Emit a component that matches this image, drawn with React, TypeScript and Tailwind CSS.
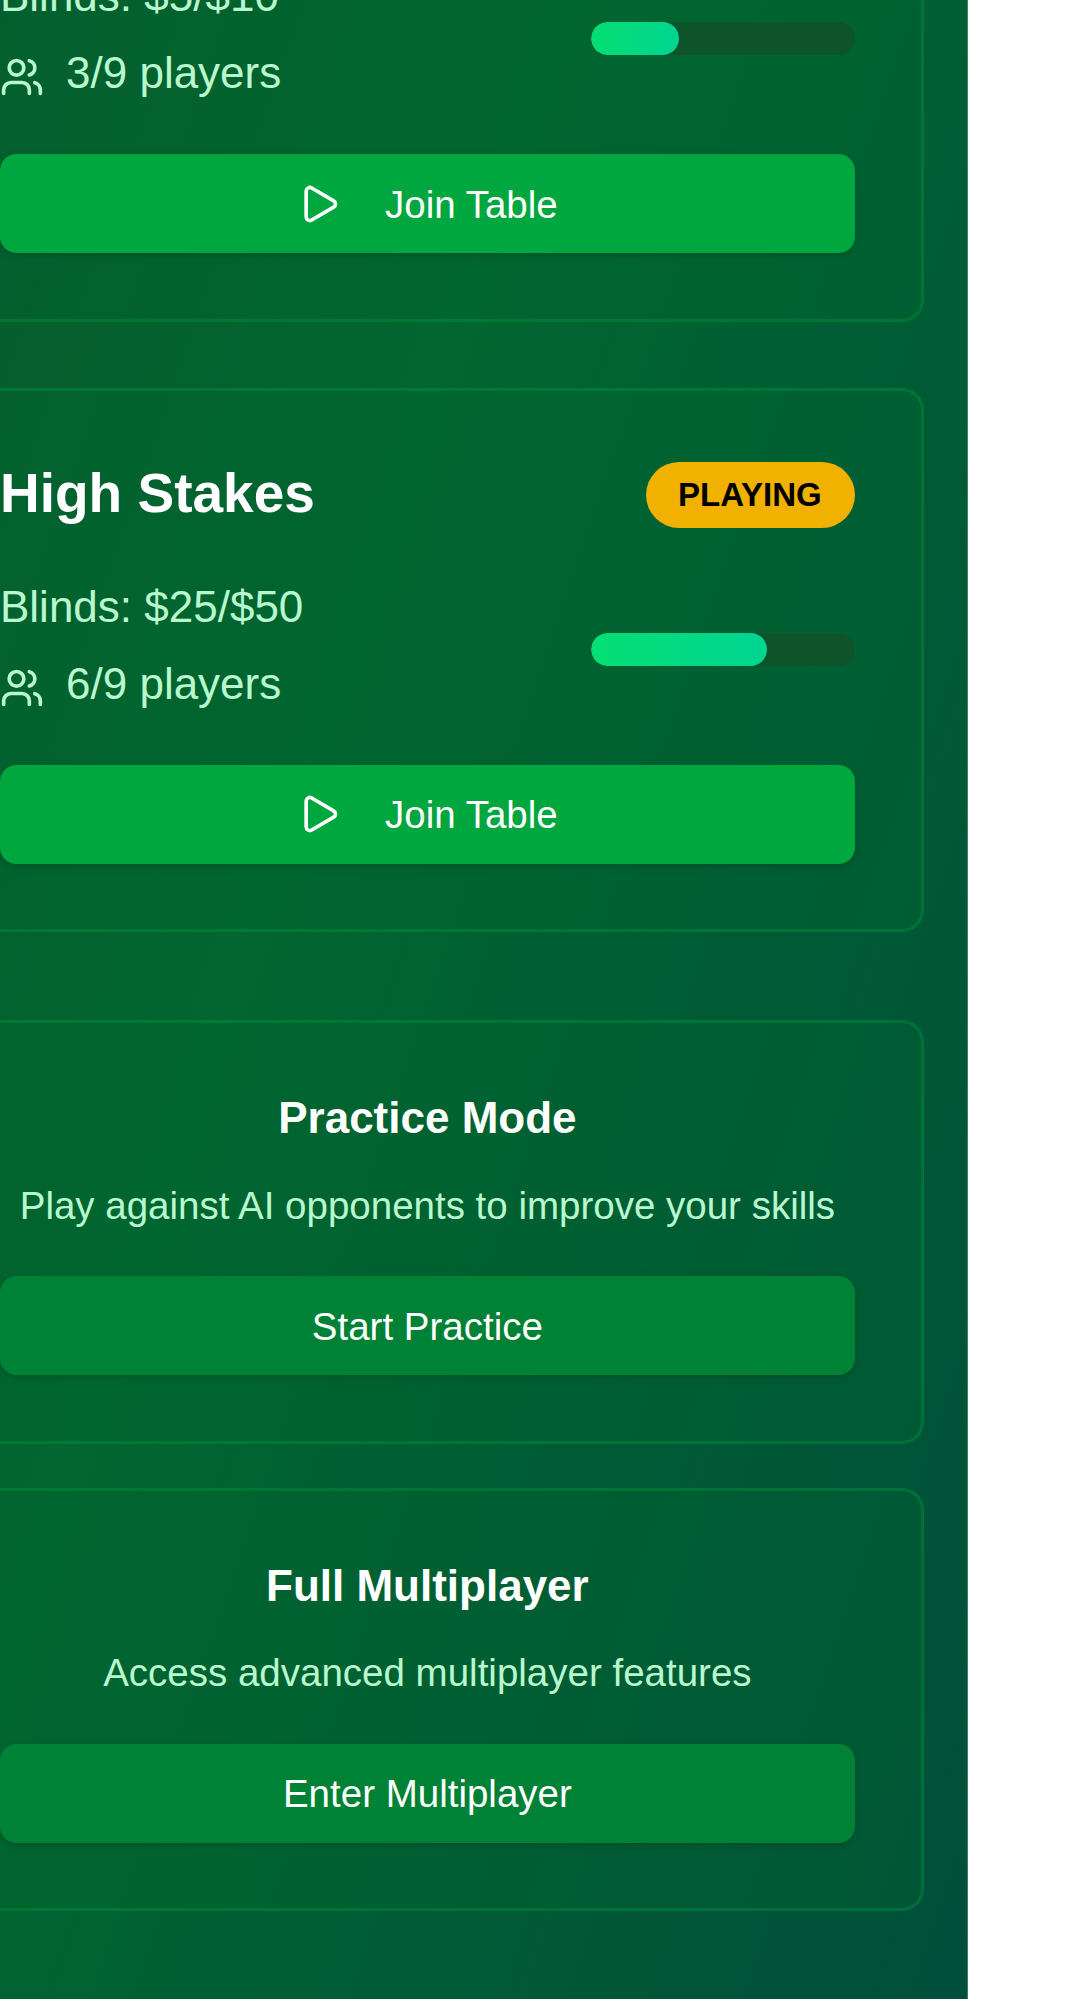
import { Play, Users } from "lucide-react";

const cardFrame =
  "-ml-[69px] mr-11 shrink-0 border-[3px] border-[#00a63e]/30 bg-[#016630]/30 px-[66px] pb-[65.75px]";

const buttonBase =
  "flex h-[99px] w-full items-center justify-center gap-[22px] rounded-[16.5px] text-[38.5px] leading-[55px] text-white shadow-[0_2.75px_8.25px_0_rgba(0,0,0,0.1),0_2.75px_5.5px_-2.75px_rgba(0,0,0,0.1)]";

function TableBody({ blinds, players }: { blinds: string; players: number }) {
  return (
    <>
      <div className="mb-11 flex h-[143px] items-center justify-between">
        <div className="text-[44px] leading-[57px] text-[#b9f8cf]">
          <p className="h-[66px]">{blinds}</p>
          <div className="mt-[11px] flex h-[66px] items-center gap-[22px]">
            <Users size={44} />
            <span className="h-[66px]">{players}/9 players</span>
          </div>
        </div>
        <div className="h-[33px] w-66 overflow-hidden rounded-full bg-[#0d542b]">
          <div
            className="h-full rounded-full bg-[linear-gradient(to_right,#05df72,#00d492)]"
            style={{ width: `${(players / 9) * 100}%` }}
          />
        </div>
      </div>
      <button className={`${buttonBase} bg-[#00a63e]`}>
        <Play size={44} className="mr-[22px]" />
        <span className="pt-[1.5px]">Join Table</span>
      </button>
    </>
  );
}

function ModeCard({ title, text, action }: { title: string; text: string; action: string }) {
  return (
    <section className={`${cardFrame} rounded-[22px] pt-[65.75px] text-center`}>
      <h3 className="mb-[22px] h-[66px] text-[44px] leading-[57px] font-bold text-white">{title}</h3>
      <p className="mb-11 h-[55px] pt-[0.75px] text-[38.5px] leading-[55px] whitespace-nowrap text-[#b9f8cf]">
        {text}
      </p>
      <button className={`${buttonBase} bg-[#008236]`}>
        <span className="pt-[1.5px]">{action}</span>
      </button>
    </section>
  );
}

export default function App() {
  return (
    <div className="h-[1999px] w-[1081px] overflow-hidden bg-white font-['Liberation_Sans',Arial,sans-serif]">
      <main className="flex h-full w-[967.75px] flex-col bg-[linear-gradient(to_bottom_right,#0d542b,#016630,#004f3b)] bg-[size:1080.75px_3190px] bg-[position:right_bottom] bg-no-repeat">
        <section className={`${cardFrame} -mt-[33px] rounded-b-[22px] border-t-0`}>
          <TableBody blinds="Blinds: $5/$10" players={3} />
        </section>
        <section className={`${cardFrame} mt-[66px] rounded-[22px] pt-[65.75px]`}>
          <div className="mb-11 flex h-[77px] items-center justify-between">
            <h3 className="-mt-[3px] text-[55px] leading-[75px] font-bold text-white">High Stakes</h3>
            <span className="rounded-full bg-[#f0b100] py-[11px] pr-[33px] pl-[32.5px] text-[33px] leading-[44px] font-bold text-black">
              PLAYING
            </span>
          </div>
          <TableBody blinds="Blinds: $25/$50" players={6} />
        </section>
        <div className="mt-[88px] flex flex-col gap-11">
          <ModeCard
            title="Practice Mode"
            text="Play against AI opponents to improve your skills"
            action="Start Practice"
          />
          <ModeCard
            title="Full Multiplayer"
            text="Access advanced multiplayer features"
            action="Enter Multiplayer"
          />
        </div>
      </main>
    </div>
  );
}
